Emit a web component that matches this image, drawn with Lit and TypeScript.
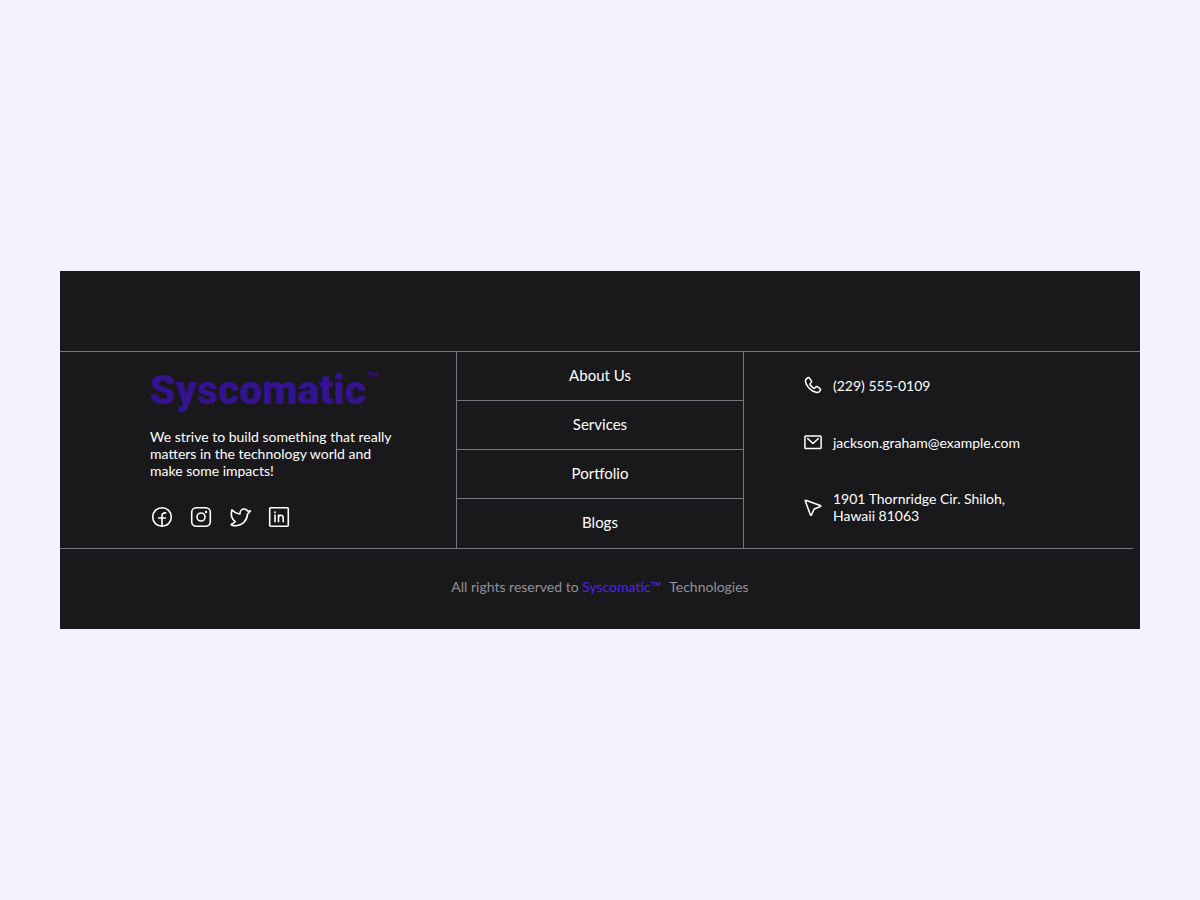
import { LitElement, html, css, svg } from "lit";
import { customElement } from "lit/decorators.js";

const facebook = svg`<circle cx="12" cy="12" r="9.3"/><path d="M12 21.3V10.6c0-1.800 1-2.800 3.600-2.700M8.600 13h6.800"/>`;
const instagram = svg`<rect x="2.700" y="2.700" width="18.600" height="18.600" rx="4.500"/><circle cx="12" cy="12" r="4"/><circle cx="17" cy="7" r="1.200" fill="currentColor" stroke="none"/>`;
const twitter = svg`<path d="M12 8.300c0-2.500 1.900-4.300 4.100-4.300 1.600 0 2.800.8 3.500 2H22.500l-3 3.100C19 16 14 20.700 7.500 20.700c-2.500 0-4.200-.7-4.200-1.300 0-.4 2.700-1 4-2.800C3.500 14 2.500 9.500 3.900 4.800 6 7.200 9 8.700 12 9z"/>`;
const linkedin = svg`<rect x="2.700" y="2.700" width="18.600" height="18.600" rx="1"/><path d="M8 10v6.700M11.500 10v6.700M11.500 13c0-1.800 1-2.700 2.400-2.700s2.300.9 2.300 2.700v3.700"/><circle cx="8" cy="7.300" r="1" fill="currentColor" stroke="none"/>`;
const phone = svg`<path d="M5.300 2.300C3.500 3 1.800 4.800 2 7.200c.5 6 7.800 13.700 14 14.600 2.900.4 5.200-1.200 6-3.200.3-.8.100-1.400-.6-1.900l-3.300-2.200c-.9-.6-1.700-.5-2.400.2l-1.300 1.300c-.5.500-1.100.5-1.700.1-1.700-1.100-3.300-2.700-4.400-4.400-.4-.6-.3-1.200.1-1.700l1.200-1.300c.6-.7.700-1.400.2-2.200L7.600 3.100c-.6-.9-1.300-1.200-2.300-.8z"/>`;
const mail = svg`<rect x="1.200" y="4" width="21.600" height="16.500" rx="1"/><path d="M5 7.500l7 6.500 7-6.500"/>`;
const pointer = svg`<path d="M2.200 3.100l19.600 6.800c.9.300.9 1.100.1 1.500l-8.300 3.300-3.600 7.800c-.4.800-1.200.8-1.500-.1L1.600 3.700c-.1-.4.200-.7.600-.6z"/>`;

@customElement("app-root")
export class AppRoot extends LitElement {
  static styles = css`
    :host {
      display: flex;
      flex-direction: column;
      justify-content: center;
      box-sizing: border-box;
      min-height: 100vh;
      padding: 24px 60px;
      background: #f2f2fc;
      font-family: Lato, "Liberation Sans", sans-serif;
      font-size: 14px;
      line-height: 17px;
      color: #fff;
    }
    a { color: inherit; text-decoration: none; }
    ul { list-style: none; margin: 0; padding: 0; }
    p, address { margin: 0; font-style: normal; }
    svg { display: block; fill: none; stroke: currentColor; stroke-linecap: round; stroke-linejoin: round; }
    .footer { background: #19191b; padding-top: 80px; }
    .columns {
      display: grid;
      grid-template-columns: 11fr 8fr 11fr;
      border-top: 1px solid #77767e;
    }
    .brand { padding: 16px 16px 18px 90px; }
    .logo {
      display: flex;
      align-items: flex-start;
      gap: 1px;
      font-family: Roboto, sans-serif;
      font-weight: 900;
      font-size: 41px;
      line-height: 44px;
      color: #34138f;
    }
    .mark { font-family: Lato, sans-serif; font-size: 17px; line-height: 20px; font-weight: 400; }
    .tagline { margin-top: 16px; max-width: 250px; }
    .social { display: flex; gap: 15px; margin-top: 26px; }
    .social svg { width: 24px; height: 24px; stroke-width: 1.6; }
    .nav { border: solid #77767e; border-width: 0 1px; }
    .nav li { border-bottom: 1px solid #77767e; }
    .nav li:last-child { border-bottom: 0; }
    .nav a { display: block; padding: 11px 12px 13px; font-size: 15px; line-height: 24px; text-align: center; }
    .contact { display: flex; flex-direction: column; gap: 39px; padding: 24px 24px 24px 60px; }
    .contact li { display: flex; align-items: center; gap: 11px; }
    .contact svg { width: 18px; height: 18px; flex: none; stroke-width: 2; }
    .place { max-width: 180px; }
    .rule { height: 1px; margin: 0 7px 0 0; border: 0; background: #77767e; }
    .legal { padding: 29px 24px 34px; text-align: center; color: #92919a; }
    .legal a { color: #5020ff; margin-right: 5px; }
  `;

  private social = [
    { name: "Facebook", icon: facebook },
    { name: "Instagram", icon: instagram },
    { name: "Twitter", icon: twitter },
    { name: "LinkedIn", icon: linkedin },
  ];

  private links = ["About Us", "Services", "Portfolio", "Blogs"];

  private icon(shape: unknown) {
    return html`<svg viewBox="0 0 24 24" aria-hidden="true">${shape}</svg>`;
  }

  render() {
    return html`
      <footer class="footer">
        <div class="columns">
          <section class="brand">
            <a class="logo" href="#">Syscomatic<span class="mark">™</span></a>
            <p class="tagline">We strive to build something that really matters in the technology world and make some impacts!</p>
            <ul class="social">
              ${this.social.map((s) => html`<li><a href="#" aria-label=${s.name}>${this.icon(s.icon)}</a></li>`)}
            </ul>
          </section>
          <nav class="nav">
            <ul>${this.links.map((l) => html`<li><a href="#">${l}</a></li>`)}</ul>
          </nav>
          <address>
            <ul class="contact">
              <li>${this.icon(phone)}<a href="tel:+12295550109">(229) 555-0109</a></li>
              <li>${this.icon(mail)}<a href="mailto:jackson.graham@example.com">jackson.graham@example.com</a></li>
              <li>${this.icon(pointer)}<span class="place">1901 Thornridge Cir. Shiloh, Hawaii 81063</span></li>
            </ul>
          </address>
        </div>
        <hr class="rule" />
        <p class="legal">All rights reserved to <a href="#">Syscomatic™</a> Technologies</p>
      </footer>
    `;
  }
}
